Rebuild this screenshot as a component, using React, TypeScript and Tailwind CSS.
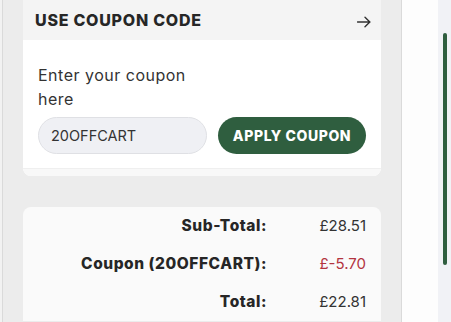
const font = { fontFamily: "Inter, 'Noto Sans', sans-serif" };

const rows = [
  { label: "Sub-Total:", value: "£28.51", red: false },
  { label: "Coupon (20OFFCART):", value: "£-5.70", red: true },
  { label: "Total:", value: "£22.81", red: false },
];

const App = () => {
  return (
    <div
      className="w-[451px] h-[322px] overflow-hidden flex bg-[#f3f3f3] text-[#2b2b2b]"
      style={font}
    >
      <div className="w-[2px] shrink-0 bg-[#f2f2f2]" />
      <section className="w-[400px] shrink-0 h-full bg-[#ececec] border-x border-[#dadada] pl-[20px] pr-[19px]">
        {/* coupon card */}
        <div className="w-[358px] rounded-b-lg bg-white overflow-hidden">
          <div className="h-[40px] bg-[#f4f4f4] flex items-center justify-between pl-[12px] pr-[10px]">
            <h2 className="text-[16px] font-extrabold tracking-[0.75px] text-[#262626]">USE COUPON CODE</h2>
            <svg width="14" height="12" viewBox="0 0 14 12" className="mt-[3px] text-[#333]">
              <path
                d="M0.5 6h12.5M8 1.2 12.8 6 8 10.8"
                fill="none"
                stroke="currentColor"
                strokeWidth="1.4"
                strokeLinecap="round"
                strokeLinejoin="round"
              />
            </svg>
          </div>
          <div className="px-[15px] pt-[23px] pb-[14px]">
            <p className="text-[16px] leading-[24px] tracking-[0.5px] text-[#333]">
              Enter your coupon
              <br />
              here
            </p>
            <div className="mt-[6px] flex items-center justify-between">
              <input
                readOnly
                value="20OFFCART"
                className="w-[169px] h-[37px] rounded-full bg-[#eff0f4] border border-[#dfe0e4] pl-[12px] text-[14.5px] text-[#333] outline-none"
                style={font}
              />
              <button className="w-[148px] h-[37px] rounded-full bg-[#2f5e3f] text-white text-[14px] font-extrabold tracking-[0.6px]">
                APPLY COUPON
              </button>
            </div>
          </div>
          <div className="h-[8px] border-t border-[#efefef] bg-[#f8f8f8]" />
        </div>

        {/* totals */}
        <div className="mt-[31px] w-[358px] rounded-t-lg bg-[#fafafa] pr-[15px]">
          {rows.map((row) => (
            <div key={row.label} className="h-[38px] flex items-center justify-end">
              <span className="text-[15.5px] font-extrabold tracking-[0.55px] text-[#262626]">{row.label}</span>
              <span
                className={`w-[99px] text-right text-[15px] ${
                  row.red ? "text-[#b3343f]" : "text-[#333]"
                }`}
              >
                {row.value}
              </span>
            </div>
          ))}
        </div>
      </section>
      <div className="w-[36px] shrink-0 bg-[#fdfdfd]" />
      <div className="flex-1 bg-[#f1f2f6] pl-[5px] pt-[33px]">
        <div className="w-[4px] h-[232px] rounded-full bg-[#2f5e3f]" />
      </div>
    </div>
  );
};

export default App;
